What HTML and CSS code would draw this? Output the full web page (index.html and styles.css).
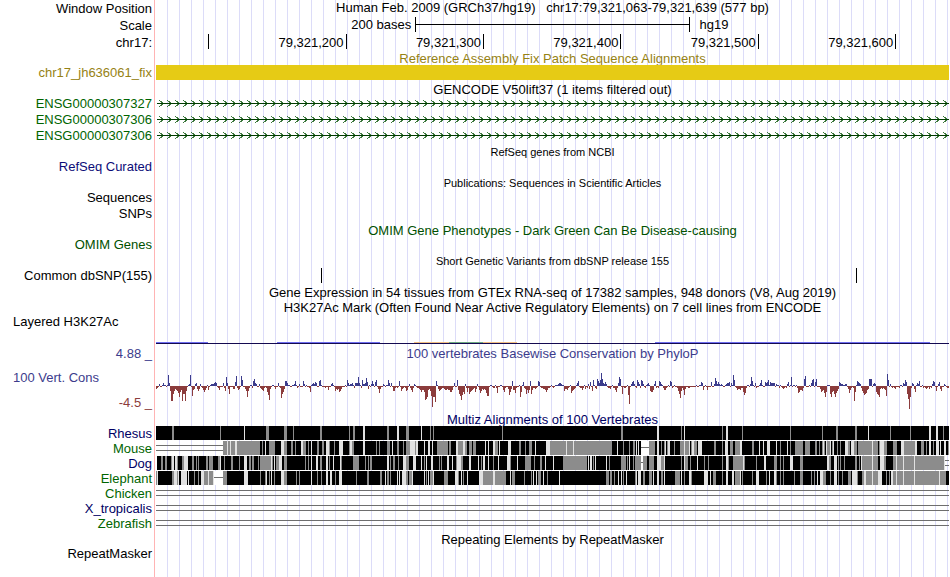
FILE: index.html
```html
<!DOCTYPE html>
<html lang="en">
<head>
  <meta charset="UTF-8">
  <meta name="viewport" content="width=device-width, initial-scale=1.0">
  <title>Human chr17:79,321,063-79,321,639</title>
  <link rel="stylesheet" href="styles.css">
</head>
<body>

  <main class="browser">
    <!-- Position and ruler -->
    <div class="row head">
      <div class="label">Window Position</div>
      <div class="title">Human Feb. 2009 (GRCh37/hg19) &nbsp; chr17:79,321,063-79,321,639 (577 bp)</div>
    </div>
    <div class="row head">
      <div class="label">Scale</div>
      <div class="scale">
        <span class="scale-size">200 bases</span>
        <span class="scale-bar"></span>
        <span class="scale-db">hg19</span>
      </div>
    </div>
    <div class="row head">
      <div class="label">chr17:</div>
      <div class="ruler">
        <span class="tick first"></span>
        <span class="tick">79,321,200</span>
        <span class="tick">79,321,300</span>
        <span class="tick">79,321,400</span>
        <span class="tick">79,321,500</span>
        <span class="tick">79,321,600</span>
      </div>
    </div>

    <!-- Fix patches -->
    <div class="row caption tight patch-caption"><div class="title gold">Reference Assembly Fix Patch Sequence Alignments</div></div>
    <div class="row">
      <div class="label gold">chr17_jh636061_fix</div>
      <div class="patch"></div>
    </div>

    <!-- Genes -->
    <div class="row caption"><div class="title">GENCODE V50lift37 (1 items filtered out)</div></div>
    <div class="row">
      <div class="label gene">ENSG00000307327</div>
      <svg class="track" data-track="gene"></svg>
    </div>
    <div class="row">
      <div class="label gene">ENSG00000307306</div>
      <svg class="track" data-track="gene"></svg>
    </div>
    <div class="row">
      <div class="label gene">ENSG00000307306</div>
      <svg class="track" data-track="gene"></svg>
    </div>
    <div class="row caption"><div class="title small">RefSeq genes from NCBI</div></div>
    <div class="row"><div class="label refseq">RefSeq Curated</div></div>

    <!-- Literature and phenotypes -->
    <div class="row caption"><div class="title small">Publications: Sequences in Scientific Articles</div></div>
    <div class="row"><div class="label">Sequences</div></div>
    <div class="row"><div class="label">SNPs</div></div>
    <div class="row caption"><div class="title omim">OMIM Gene Phenotypes - Dark Green Can Be Disease-causing</div></div>
    <div class="row"><div class="label omim">OMIM Genes</div></div>

    <!-- Variants -->
    <div class="row caption"><div class="title small">Short Genetic Variants from dbSNP release 155</div></div>
    <div class="row">
      <div class="label">Common dbSNP(155)</div>
      <svg class="track" data-track="snp"></svg>
    </div>

    <!-- Expression and regulation -->
    <div class="row caption"><div class="title">Gene Expression in 54 tissues from GTEx RNA-seq of 17382 samples, 948 donors (V8, Aug 2019)</div></div>
    <div class="row caption"><div class="title">H3K27Ac Mark (Often Found Near Active Regulatory Elements) on 7 cell lines from ENCODE</div></div>
    <div class="row layered">
      <div class="label side">Layered H3K27Ac</div>
      <svg class="track" data-track="layered"></svg>
    </div>

    <!-- Conservation -->
    <div class="row caption tight">
      <div class="label up">4.88 _</div>
      <div class="title up">100 vertebrates Basewise Conservation by PhyloP</div>
    </div>
    <div class="row cons">
      <div class="cons-labels">
        <div class="label side up">100 Vert. Cons</div>
        <div class="label down">-4.5 _</div>
      </div>
      <svg class="track" data-track="phylop"></svg>
    </div>

    <!-- Alignments -->
    <div class="row caption"><div class="title navy">Multiz Alignments of 100 Vertebrates</div></div>
    <div class="row align">
      <div class="label navy">Rhesus</div>
      <svg class="track" data-track="align" data-species="rhesus"></svg>
    </div>
    <div class="row align">
      <div class="label green">Mouse</div>
      <svg class="track" data-track="align" data-species="mouse"></svg>
    </div>
    <div class="row align">
      <div class="label navy">Dog</div>
      <svg class="track" data-track="align" data-species="dog"></svg>
    </div>
    <div class="row align">
      <div class="label green">Elephant</div>
      <svg class="track" data-track="align" data-species="elephant"></svg>
    </div>
    <div class="row align">
      <div class="label green">Chicken</div>
      <div class="unaligned"></div>
    </div>
    <div class="row align">
      <div class="label navy">X_tropicalis</div>
      <div class="unaligned"></div>
    </div>
    <div class="row align">
      <div class="label green">Zebrafish</div>
      <div class="unaligned"></div>
    </div>

    <!-- Repeats -->
    <div class="row caption"><div class="title">Repeating Elements by RepeatMasker</div></div>
    <div class="row align"><div class="label">RepeatMasker</div></div>
  </main>

  <script src="tracks.js"></script>
</body>
</html>
```

FILE: styles.css
```css
body {
  margin: 0;
  background: #fff;
  color: #000;
  font-family: "Liberation Sans", Arial, Helvetica, sans-serif;
  font-size: 13px;
}
.browser {
  min-height: 100vh;
  margin-right: 1px;
  overflow: hidden;
  background-image:
    linear-gradient(to right, #fff 154px, #ffb4b4 154px, #ffb4b4 155px, #fff 155px, #fff 156px, transparent 156px),
    linear-gradient(to right, #dcdcf8 1px, transparent 1px);
  background-size: 100% 100%, 12px 100%;
  background-position: 0 0, 11px 0;
}
.row {
  display: grid;
  grid-template-columns: 152px minmax(0, 1fr);
  column-gap: 4px;
  height: 16px;
  line-height: 16px;
  white-space: nowrap;
}
.head {
  height: 17px;
}
.head .label {
  line-height: 18px;
}
.caption,
.align {
  height: 15px;
  line-height: 15px;
}
.caption .title {
  line-height: 17px;
}
.tight .title {
  line-height: 15px;
}
.patch-caption {
  height: 14px;
}
.label {
  text-align: right;
}
.side {
  padding-left: 13px;
  text-align: left;
}
.title {
  grid-column: 2;
  text-align: center;
}
.small {
  font-size: 11px;
}
.track {
  display: block;
  width: 100%;
  height: 100%;
  shape-rendering: crispEdges;
}

/* text colours */
.gold { color: #968214; }
.gene { color: #006400; }
.refseq { color: #0c0c78; }
.omim { color: #005000; }
.navy { color: #000064; }
.green { color: #006400; }
.up { color: #3c3c8c; }
.down { color: #8c3c3c; }

/* scale and ruler */
.scale {
  display: grid;
  grid-template-columns: 32.7% 34.7% auto;
  padding-bottom: 2px;
}
.scale-size {
  padding-right: 4px;
  text-align: right;
}
.scale-bar {
  height: 15px;
  border: solid #000;
  border-width: 0 1px;
  background: linear-gradient(#000, #000) 0 7px / 100% 1px no-repeat;
}
.scale-db {
  padding-left: 9px;
}
.ruler {
  display: flex;
}
.tick {
  box-sizing: border-box;
  width: 17.33%;
  height: 15px;
  padding-right: 2px;
  border-right: 1px solid #000;
  text-align: right;
  line-height: 17px;
}
.tick.first {
  width: 6.7%;
}

/* tracks */
.patch {
  height: 15px;
  background: #e6cb15;
}
.layered {
  height: 32px;
}
.cons {
  height: 50px;
}
.cons-labels {
  display: flex;
  flex-direction: column;
  justify-content: space-between;
  padding: 9px 0 0;
}
.unaligned {
  height: 4px;
  margin-top: 4px;
  border: solid #6e6e6e;
  border-width: 1px 0;
}
```

FILE: tracks.js
```js
const svgNS = "http://www.w3.org/2000/svg";

// one letter per base column: A = 1px up, a = 1px down
const phylop =
  "cbaBaaACAAaAKCeoohecdegkfdohhoeaABKajdcBCcecBabdfdbAdaABBBCDCabdaaaCbe" +
  "ICchaaaccDJbdcaJFaacekebAAbEGCBaaBbcdebabfincaAAacaaCablhfcEECAAaaAABE" +
  "AbaBaaaEBaAaabfABCBDCaaEFAaaabaadaaBCAaecdcfecaaaAaFCABBCAbCCCICAbFBBC" +
  "HDcAaBEBaDFacgcaaBAaAAFCaCaeebabaEaecbabedaBbdfbBAabbc" +
  "dfddfnmkdcejukkpEAcedcbbcddcddffdaCaaFdhjnifhBbfbhfedcbfcBadgecdcdgjja" +
  "AAabbAbgaaAAadfbaacifcEddgbaaAkfADbchdgdEhdbbcbaEDabbccdfdbbaAabaAAABC" +
  "CBAAeccdbaAgedcbACEabbdbAcabBcDaeFAbcGECFMGCBDBabbcaAbbdfbCIGahabbaAir" +
  "aBDEBabFDBbFEBabABCAeffdBEbabEDBAbddbaAaEDbaAaabehlebdicaabb" +
  "aaaaaaAaaAADCdaAadaaaDaaBHEBDBABAaaABCCDaCAKFabdccdbbfigbAAaBIEAaCbaaA" +
  "CFAaaDCDFADCCCCaBAAbAabcbabBDaAIaAAaAbgfddebGJaaaAaCFGaDGaaacfedgkfAAA" +
  "hkfehkgecDCBBAABBacgdbabofAEDCBbegihgdcGGGaBCBfhikcbcbcdjLFaBababcaaab" +
  "AAaCBFDhmwkbCBcfACBEaaAbabcbacabBEDaeaBDceaaBAabb";

// start[+width] of each block; the base colour is black
const species = {
  rhesus: {
    solid: "0+793",
    mid: "16+2 64 110+3 128+3 137 164+2 193 197+2 231+2 250+3 274 277 346 465+2 525 566 586 634 666 680+2 699+2 734 754 787",
    light: "88 207+2 241+2 265 501+2 528 570+2 712 773+2 780+2"
  },
  mouse: {
    solid: "67+418 493+300",
    mid: "67+37 106 113+6 128+3 135+2 139 147+3 152 161+2 166+2 173 178 193 196+2 220 223 231+3 241+2 247 250+4 259 281+5 286+6 293+2 302+5 309+2 313+3 317+3 339+3 363+2 369 373+3 394+62 467 473 477+2 493+6 505 508 511 518 524+4 529+4 535 538+3 558+2 566 574+3 579+5 596+2 624 634 639+8 649+5 659+2 663 666 668 671+3 676 681 684 692+2 698+3 702+14 717+5 723 728+3 737+4 748+11 765+3 770 777 792",
    light: "71 74 79+2 109 125+3 145+2 155 170+3 183+4 194+2 207+2 236 254+5 260+2 268 272+2 276 300+2 307+2 329 332 337+2 343 352+3 379 390+4 410 417 461 480 482 501+2 509 512+2 528 533 536+2 542+4 569+3 584+2 603 607 611+3 620 631 667 670 674 677 689+3 695+3 716 724+4 745+3 759+2 773+2 780+3 784 788+2",
    pair: "0+67",
    gap: "485+8"
  },
  dog: {
    solid: "1+484 487+302",
    mid: "5+2 9+2 15 21 26+2 36+2 40 42 50+2 53+4 62+2 68 75+2 83 93+2 96+2 102 104+11 116 120+3 128+3 149 152 164+2 173 185 197+6 209 212 214+2 234 237+2 242 250+3 268 283 285 300 305+2 325 337 354 369+6 378 384+2 407+24 437 453 465+5 471 477 479+6 487+4 493+5 505+3 525 529+3 534 548 552 566 572 577+10 588 600 618+3 624 627 644+3 673+2 682 684 688 699+2 703 705+17 728+2 737+51",
    light: "16+2 19+2 28+4 64 88+3 115 118 123+3 155 160+2 170+2 177 184 231+2 247+3 257+3 265 270 275+2 291+2 296 301+4 313+2 322 327+2 332 342 351+3 361 389 397 432 434+2 439 450 473 501+4 508 528 541 570+2 587 608+2 634+3 671+2 678+3 705 716 724+4 740 747 758 788",
    pair: "789+4",
    gap: "485+2"
  },
  elephant: {
    solid: "0+58 67+726",
    mid: "0 16+2 21 38 42 48+4 53+4 67+4 104 109 113 118 128+3 140 143 161 165 179 200 211+2 224+2 231+2 234 250+2 253+3 270 274+3 288+4 302 307 327+23 356+3 368 375 382+3 391 450+3 454+2 458 467 479 487+2 493+3 505+2 519+5 528 535 557+3 566 579+5 586 596 610 620 624 627 638 644+3 655 658 667+3 674 682 686 692+3 701 706+2 710+12 730 733 737+53",
    light: "1 18+3 22 25+6 32 45+3 52 57 88+4 110 115 125+3 155 170+2 174+2 183+3 229 241 243 246+4 256 268 272 277 299+3 305 311 323+4 337+2 354 377 380 387 403 462 465 470 480 482+3 497 501+2 508 525 533+2 548+4 554 570+2 576+2 584 600+3 613 618+2 661 664+3 678+3 696+5 708+2 716 722+4 735+2 740 747 758 783",
    gap: "58+9"
  }
};

function rect(svg, x, y, width, height, fill) {
  const el = document.createElementNS(svgNS, "rect");
  const box = { x, y, width, height, fill };
  for (const key in box) el.setAttribute(key, box[key]);
  svg.appendChild(el);
}

function path(svg, d, fill) {
  const el = document.createElementNS(svgNS, "path");
  el.setAttribute("d", d);
  el.setAttribute("fill", fill);
  svg.appendChild(el);
}

function blocks(svg, list, y, height, fill) {
  if (!list) return;
  let d = "";
  list.split(" ").forEach(item => {
    const [x, w = 1] = item.split("+");
    d += `M${x} ${y}h${w}v${height}h-${w}z`;
  });
  path(svg, d, fill);
}

const draw = {
  gene(svg) {
    const width = svg.getBoundingClientRect().width;
    rect(svg, 1, 7, width - 1, 1, "#003c00");
    let d = "";
    for (let x = 3; x < width; x += 8) {
      [[0, 4], [1, 5], [2, 5], [2, 6], [3, 6], [3, 8], [2, 8], [2, 9], [1, 9], [0, 10]].forEach(([dx, y]) => {
        d += `M${x + dx} ${y}h1v1h-1z`;
      });
    }
    path(svg, d, "#3c783c");
  },
  snp(svg) {
    rect(svg, 165, 0, 1, 15, "#000");
    rect(svg, 700, 0, 1, 15, "#000");
  },
  layered(svg) {
    blocks(svg, "0+52 121+103 499+275", 28, 1, "#6e6ef0");
    blocks(svg, "258+35 327+34", 28, 1, "#f0be82");
    blocks(svg, "293+34", 28, 1, "#6eaa82");
    rect(svg, 0, 29, "100%", 1, "#140a50");
  },
  phylop(svg) {
    let up = "";
    let down = "";
    [...phylop].forEach((c, x) => {
      if (c < "a") {
        up += `M${x} 25h1v-${c.charCodeAt(0) - 64}h-1z`;
      } else {
        down += `M${x} 25h1v${c.charCodeAt(0) - 96}h-1z`;
      }
    });
    path(svg, up, "#3c3c8c");
    path(svg, down, "#8c3c3c");
  },
  align(svg) {
    const s = species[svg.dataset.species];
    blocks(svg, s.solid, 0, 14, "#000");
    blocks(svg, s.mid, 0, 14, "#8c8c8c");
    blocks(svg, s.light, 0, 14, "#e1e1e1");
    blocks(svg, s.gap, 0, 14, "#fff");
    blocks(svg, s.gap, 6, 1, "#6e6e6e");
    blocks(svg, s.pair, 4, 1, "#6e6e6e");
    blocks(svg, s.pair, 9, 1, "#6e6e6e");
  }
};

document.querySelectorAll("[data-track]").forEach(svg => draw[svg.dataset.track](svg));
```
